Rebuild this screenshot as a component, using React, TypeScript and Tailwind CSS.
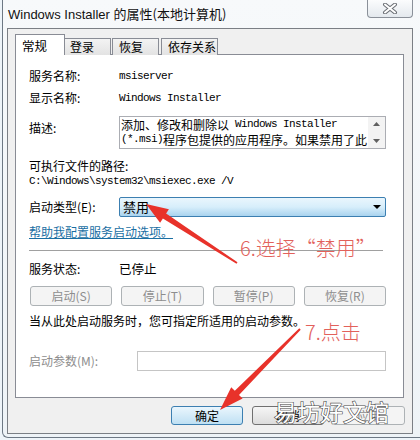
import type { ReactNode } from "react";

const CJK = "font-['Noto_Sans_CJK_SC',sans-serif]";
const MONO = "font-['Liberation_Mono',monospace] text-[11px] tracking-[-0.6px]";

function Row({ label, children, className = "" }: { label: string; children: ReactNode; className?: string }) {
  return (
    <div className={`flex h-4 items-center ${className}`}>
      <span className="w-[90px] shrink-0">{label}</span>
      {children}
    </div>
  );
}

function ActionButton({ label, disabled = false, primary = false }: { label: string; disabled?: boolean; primary?: boolean }) {
  const tone = primary
    ? "border-[#3c7fb1] bg-gradient-to-b from-[#eaf6fd] to-[#bfe0f3] text-black"
    : disabled
      ? "border-[#adb2b5] bg-[#f4f4f4] text-[#8d8d8d]"
      : "border-[#707070] bg-gradient-to-b from-[#f6f6f6] to-[#dcdcdc] text-black";
  return (
    <div className={`flex h-full items-center justify-center rounded-[3px] border ${tone}`}>{label}</div>
  );
}

function CloseGlyph() {
  return (
    <svg width="16" height="11" viewBox="0 0 16 11">
      <path d="M3 1.5 L13 9.5 M13 1.5 L3 9.5" stroke="#6b6f75" strokeWidth="4" strokeLinecap="round" />
      <path d="M3 1.5 L13 9.5 M13 1.5 L3 9.5" stroke="#ffffff" strokeWidth="2" strokeLinecap="round" />
    </svg>
  );
}

export default function App() {
  return (
    <div className={`relative h-[440px] w-[420px] overflow-hidden bg-[#eef4f9] text-[12px] text-black ${CJK}`}>
      <div className="ml-[2px] h-[438px] w-[418px] rounded-bl-[6px] border-b border-l border-[#6d7884] bg-gradient-to-b from-[#f7f9fb] to-[#eef3f7]">
        {/* title bar */}
        <div className="flex h-[28px] items-start justify-between pl-[5px] pr-[7px]">
          <span className="mt-[5px] text-[13px] leading-[18px] text-[#111] [text-shadow:0_0_6px_#fff]">
            <span className="font-['Liberation_Sans',sans-serif]">Windows Installer </span>的属性(本地计算机)
          </span>
          <div className="flex h-[18px] w-[46px] items-center justify-center rounded-b-[4px] border border-t-0 border-[#8a9099] bg-gradient-to-b from-[#fbfcfd] to-[#e4e9ee]">
            <CloseGlyph />
          </div>
        </div>

        {/* dialog body */}
        <div className="ml-[4px] flex h-[406px] w-[406px] flex-col border border-[#7b7f85] bg-[#f0f0f0] px-[7px] pb-[7px] pt-[6px]">
          <div className="relative z-10 flex h-[20px] items-end">
            <div className="flex h-[21px] w-[50px] items-start border border-b-0 border-[#898c95] bg-white pl-[6px] pt-[2px] text-[12.5px]">常规</div>
            <div className="flex h-[17px] w-[46px] items-center border border-b-0 border-l-0 border-[#898c95] bg-gradient-to-b from-[#f3f3f3] to-[#e3e3e3] pl-[5px]">登录</div>
            <div className="ml-[1px] flex h-[17px] w-[47px] items-center border border-b-0 border-[#898c95] bg-gradient-to-b from-[#f3f3f3] to-[#e3e3e3] pl-[6px]">恢复</div>
            <div className="ml-[2px] flex h-[17px] w-[57px] items-center border border-b-0 border-[#898c95] bg-gradient-to-b from-[#f3f3f3] to-[#e3e3e3] pl-[6px]">依存关系</div>
          </div>

          <div className="-mt-px flex h-[344px] w-[389px] flex-col border border-[#898c95] bg-white pl-[13px] pr-[17px] pt-[13px]">
            <Row label="服务名称:">
              <span className={MONO}>msiserver</span>
            </Row>
            <Row label="显示名称:" className="mt-[6px]">
              <span className={MONO}>Windows Installer</span>
            </Row>

            <div className="mt-[10px] flex">
              <span className="mt-[3px] w-[90px] shrink-0">描述:</span>
              <div className="flex h-[33px] flex-1 border border-[#abadb3]">
                <div className="flex flex-1 flex-col whitespace-nowrap pl-[1px]">
                  <div className="flex h-[15px] items-center">添加、修改和删除以<span className={MONO}>&nbsp;Windows Installer</span></div>
                  <div className="flex h-[15px] items-center"><span className={MONO}>(*.msi)</span>程序包提供的应用程序。如果禁用了此</div>
                </div>
                <div className="flex w-[17px] shrink-0 flex-col items-center justify-between bg-[#f3f3f3] py-[5px]">
                  <svg width="7" height="4" viewBox="0 0 7 4"><path d="M0 4 L3.5 0 L7 4 Z" fill="#606060" /></svg>
                  <svg width="7" height="4" viewBox="0 0 7 4"><path d="M0 0 L3.5 4 L7 0 Z" fill="#606060" /></svg>
                </div>
              </div>
            </div>

            <div className="mt-[9px] h-4 leading-4">可执行文件的路径:</div>
            <div className={`h-[14px] leading-[14px] ${MONO}`}>C:\Windows\system32\msiexec.exe /V</div>

            <div className="mt-[9px] flex h-[20px] items-center">
              <span className="w-[90px] shrink-0">启动类型(E):</span>
              <div className="flex h-full flex-1 items-center justify-between rounded-[2px] border border-[#3c7fb1] bg-gradient-to-b from-[#eaf6fd] via-[#d7eefb] to-[#a9d3ee] pl-[3px] pr-[4px]">
                <span className="text-[13px]">禁用</span>
                <svg width="8" height="4" viewBox="0 0 8 4"><path d="M0 0 L8 0 L4 4 Z" fill="#000" /></svg>
              </div>
            </div>

            <div className="mt-[7px] h-4 leading-4 text-[#1a6fa3] underline">帮助我配置服务启动选项。</div>

            <div className="mt-[10px] w-[354px] border-t border-[#a0a0a0]" />

            <Row label="服务状态:" className="mt-[10px]">
              <span className="text-[12.5px]">已停止</span>
            </Row>

            <div className="ml-px mt-[9px] grid h-[18px] grid-cols-4 gap-[9px]">
              <ActionButton label="启动(S)" disabled />
              <ActionButton label="停止(T)" disabled />
              <ActionButton label="暂停(P)" disabled />
              <ActionButton label="恢复(R)" disabled />
            </div>

            <div className="mt-[9px] h-4 leading-4">当从此处启动服务时，您可指定所适用的启动参数。</div>

            <div className="mt-[22px] flex h-[20px] items-center">
              <span className="w-[108px] shrink-0 text-[#8d8d8d]">启动参数(M):</span>
              <div className="h-full flex-1 border border-[#c5c5c5] bg-white" />
            </div>
          </div>

          <div className="ml-auto mt-[8px] flex h-[19px] gap-[9px]">
            <div className="w-[72px]"><ActionButton label="确定" primary /></div>
            <div className="w-[72px]"><ActionButton label="取消" /></div>
            <div className="w-[72px]"><ActionButton label="应用" disabled /></div>
          </div>
        </div>
      </div>

      {/* annotations */}
      <svg className="pointer-events-none absolute left-0 top-0" width="420" height="440">
        <polygon
          points="146,204 168.9,209.3 166.1,213.5 237.5,262.2 236.5,263.8 162.9,218.5 160.1,222.7"
          fill="#e8322a"
        />
        <polygon
          points="220,410 231.2,387.3 234.8,390.8 299.3,328.3 300.7,329.7 239,395 242.6,398.5"
          fill="#e8322a"
        />
      </svg>
      <span className="pointer-events-none absolute left-[240px] top-[235px] text-[20px] font-light leading-[26px] text-[#e2615b]">6.选择“禁用”</span>
      <span className="pointer-events-none absolute left-[305px] top-[319px] text-[20px] font-light leading-[26px] text-[#e2615b]">7.点击</span>
      <span className="pointer-events-none absolute left-[274px] top-[396px] text-[23px] leading-[30px] text-white [-webkit-text-stroke:1.2px_#4a4a4a] [paint-order:stroke_fill]">易坊好文馆</span>
    </div>
  );
}
